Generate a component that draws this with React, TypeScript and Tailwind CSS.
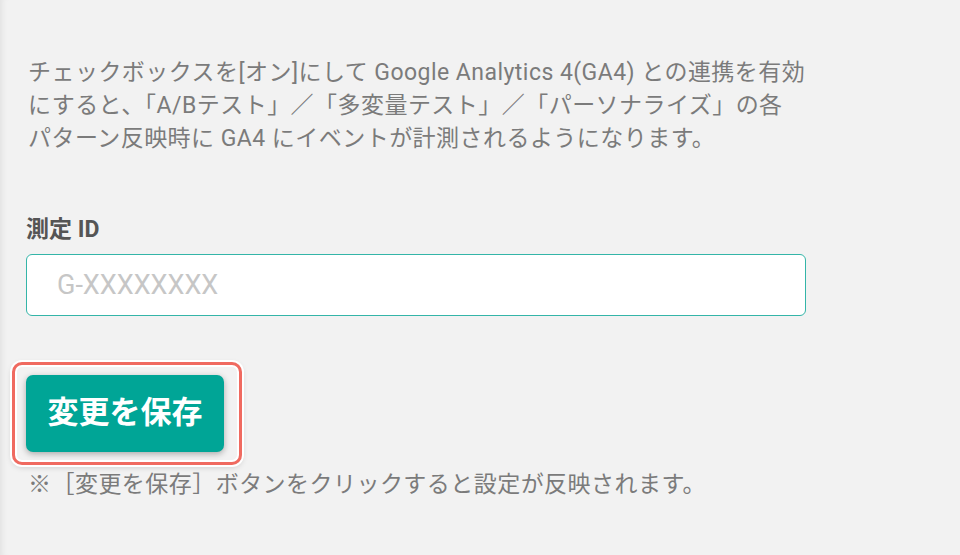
export default function App() {
  const jp = { fontFamily: 'Roboto, "Noto Sans CJK JP", sans-serif' };

  return (
    <div
      className="min-h-[555px] w-[960px] bg-[#f2f2f2] shadow-[inset_7px_0_6px_-5px_rgba(0,0,0,0.07)] pl-[26px] pt-[56px]"
      style={jp}
    >
      {/* Description */}
      <p className="pl-[2px] text-[23px] leading-[33px] tracking-[0.02em] text-[#7b7b7b] whitespace-nowrap">
        チェックボックスを[オン]にして Google Analytics 4(GA4) との連携を有効
        <br />
        にすると、「A/Bテスト」／「多変量テスト」／「パーソナライズ」の各
        <br />
        パターン反映時に GA4 にイベントが計測されるようになります。
      </p>

      {/* Measurement ID */}
      <div className="mt-[60px]">
        <label className="block text-[23px] leading-[30px] font-bold text-[#555555]">
          測定 ID
        </label>
        <input
          type="text"
          placeholder="G-XXXXXXXX"
          className="mt-[9px] block h-[62px] w-[780px] rounded-[6px] border-[1.5px] border-[#34b5a8] bg-white px-[30px] text-[27px] text-[#555] placeholder:text-[#c6c6c6] outline-none"
          style={jp}
        />
      </div>

      {/* Save button, highlighted */}
      <div className="mt-[46px] -ml-[14px] w-[230px] rounded-[10px] border-[3px] border-[#f06a60] pl-[11px] pr-[15px] py-[10px] shadow-[0_0_0_2px_#ffffff,inset_0_0_0_2px_#ffffff,0_2px_6px_rgba(0,0,0,0.18)]">
        <button
          className="flex h-[77px] w-[198px] items-center justify-center rounded-[7px] bg-[#00a596] text-[31px] font-bold text-white shadow-[0_2px_6px_rgba(0,0,0,0.3)]"
          style={jp}
        >
          変更を保存
        </button>
      </div>

      <p className="mt-[3px] pl-[2px] text-[23px] leading-[33px] tracking-[0.02em] text-[#7b7b7b] whitespace-nowrap">
        ※［変更を保存］ボタンをクリックすると設定が反映されます。
      </p>
    </div>
  );
}
